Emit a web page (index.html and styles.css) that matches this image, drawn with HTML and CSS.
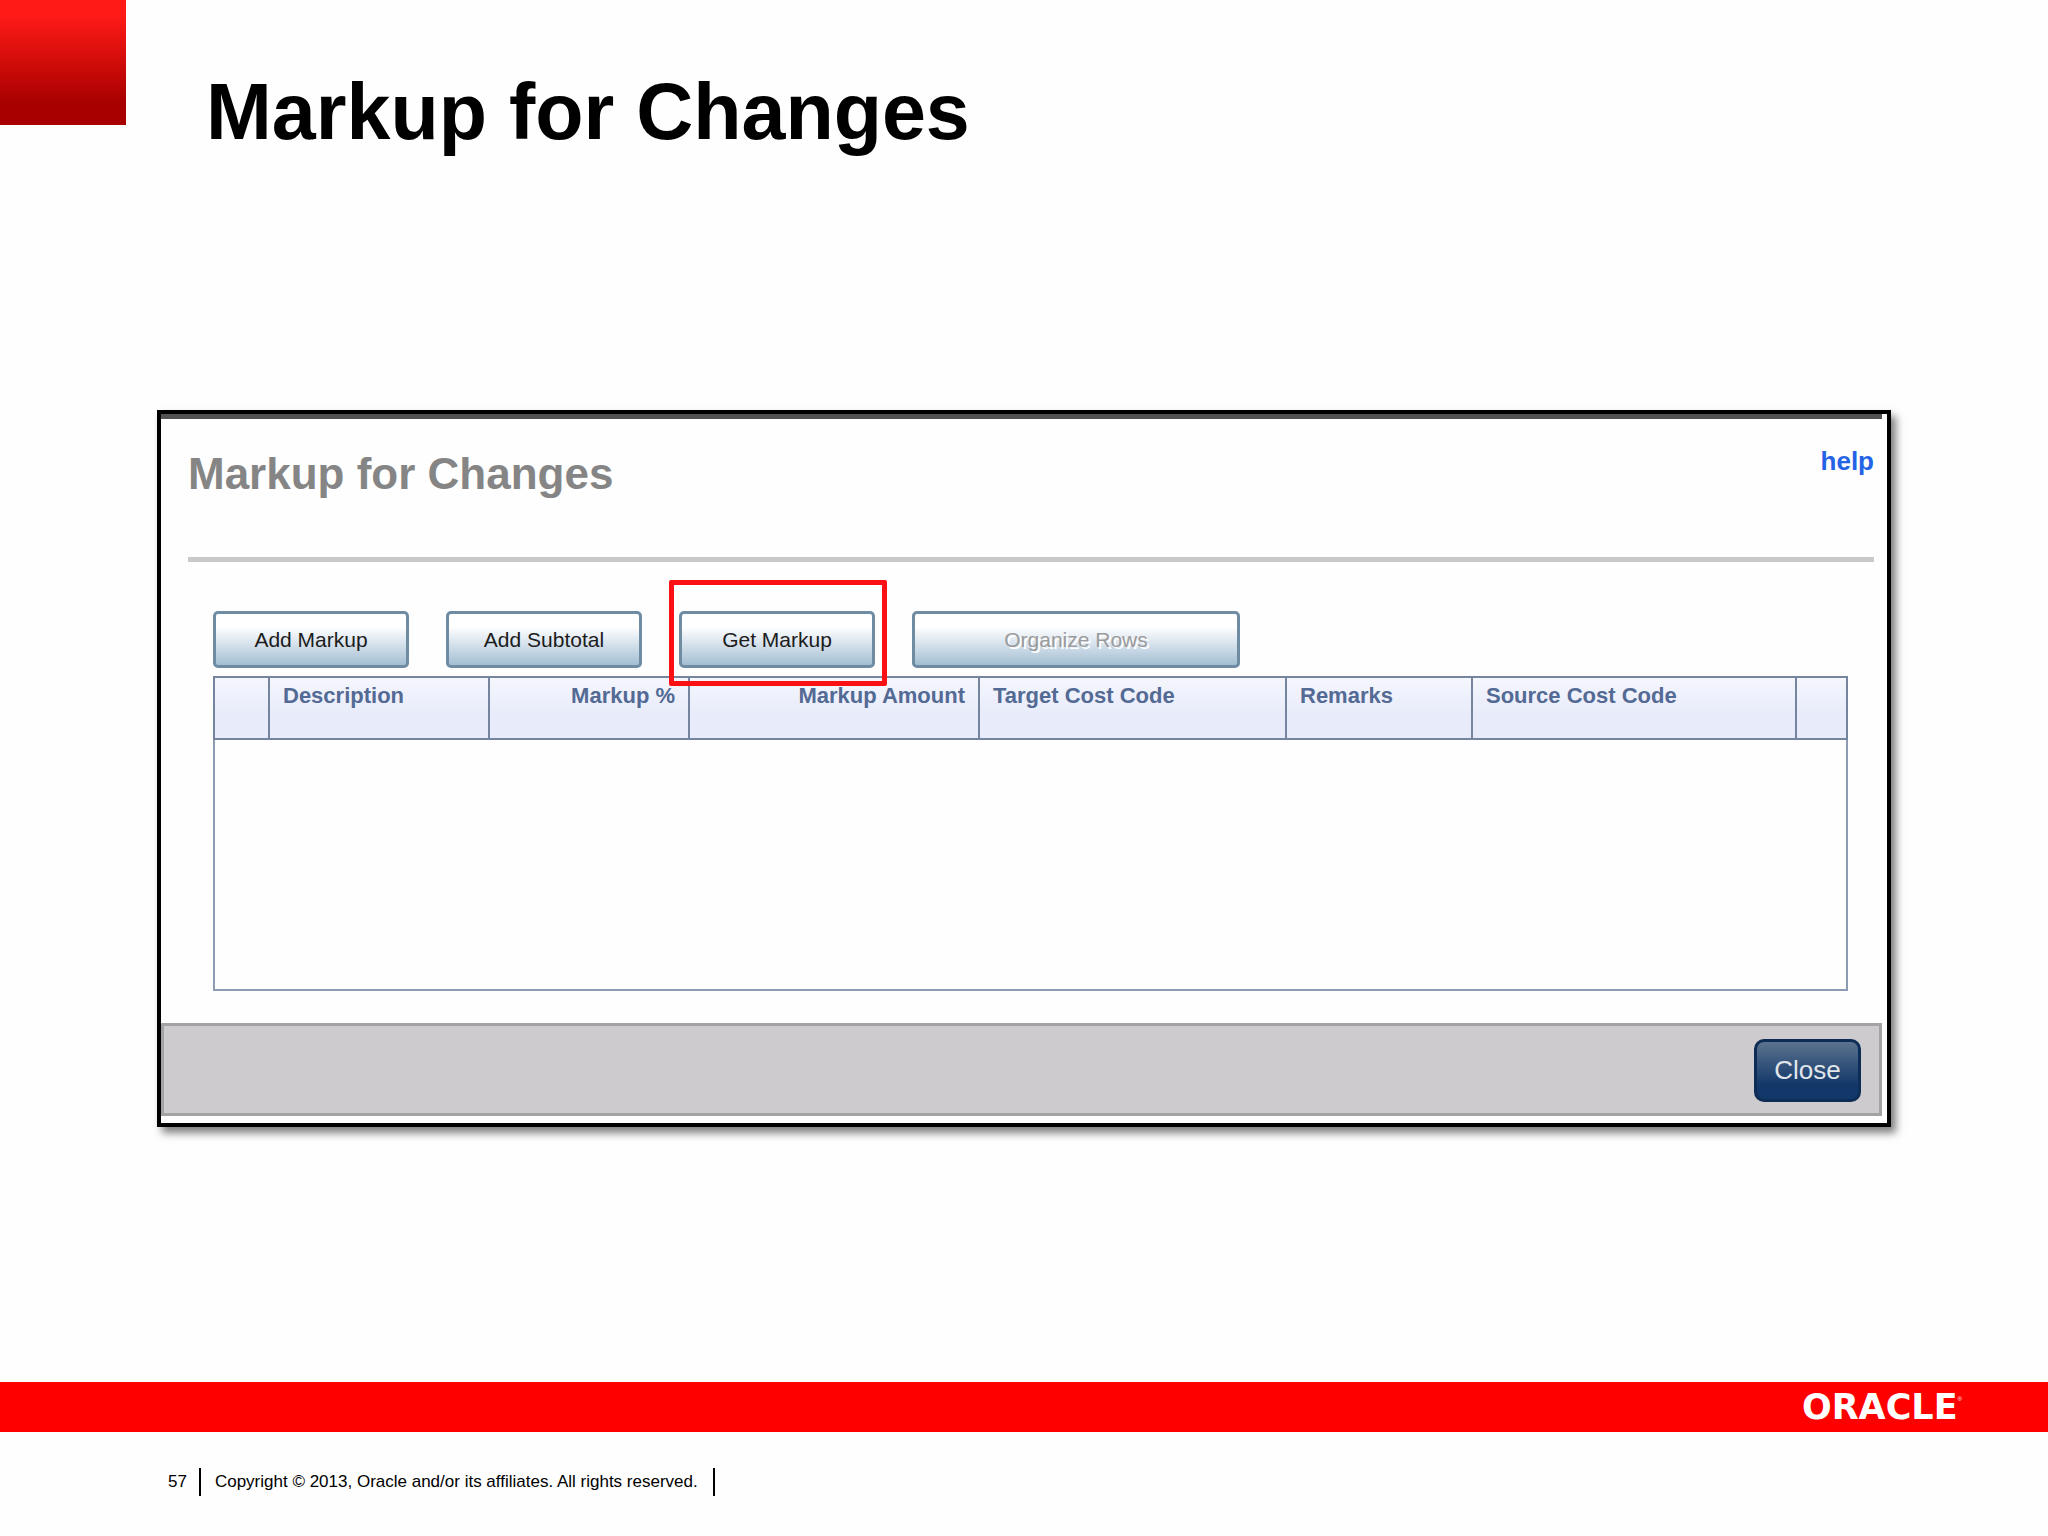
FILE: index.html
```html
<!DOCTYPE html>
<html lang="en">
<head>
  <meta charset="UTF-8">
  <meta name="viewport" content="width=device-width, initial-scale=1.0">
  <title>Markup for Changes</title>
  <link rel="stylesheet" href="styles.css">
</head>
<body>
  <header class="slide-header">
    <div class="corner"></div>
    <h1>Markup for Changes</h1>
  </header>

  <main class="slide-body">
    <section class="dialog">
      <div class="dialog-content">
        <div class="dialog-header">
          <h2>Markup for Changes</h2>
          <a href="#" class="help">help</a>
        </div>

        <div class="panel">
          <div class="toolbar">
            <button type="button" class="btn">Add Markup</button>
            <button type="button" class="btn">Add Subtotal</button>
            <div class="highlight">
              <button type="button" class="btn">Get Markup</button>
            </div>
            <button type="button" class="btn btn-wide" disabled>Organize Rows</button>
          </div>

          <table class="grid">
            <colgroup>
              <col class="col-select">
              <col class="col-description">
              <col class="col-percent">
              <col class="col-amount">
              <col class="col-target">
              <col class="col-remarks">
              <col class="col-source">
              <col class="col-end">
            </colgroup>
            <thead>
              <tr>
                <th></th>
                <th>Description</th>
                <th class="num">Markup %</th>
                <th class="num">Markup Amount</th>
                <th>Target Cost Code</th>
                <th>Remarks</th>
                <th>Source Cost Code</th>
                <th></th>
              </tr>
            </thead>
            <tbody>
              <tr><td colspan="8"></td></tr>
            </tbody>
          </table>
        </div>
      </div>

      <div class="dialog-footer">
        <button type="button" class="btn-close">Close</button>
      </div>
    </section>
  </main>

  <div class="brand-bar">
    <span class="brand">ORACLE</span><sup class="reg">®</sup>
  </div>

  <footer class="slide-footer">
    <span class="page-number">57</span>
    <span class="copyright">Copyright © 2013, Oracle and/or its affiliates. All rights reserved.</span>
  </footer>
</body>
</html>
```

FILE: styles.css
```css
* {
  margin: 0;
  padding: 0;
  box-sizing: border-box;
}

body {
  display: flex;
  flex-direction: column;
  min-height: 100vh;
  background: #fefefe;
  color: #000;
  font-family: "Liberation Sans", Arial, sans-serif;
}

/* slide heading */
.slide-header {
  display: flex;
  align-items: flex-start;
  gap: 80px;
}

.corner {
  width: 126px;
  height: 125px;
  background: linear-gradient(#ff1a16 12%, #a80000 82%);
}

.slide-header h1 {
  padding-top: 66px;
  font-size: 79px;
  line-height: 92px;
}

.slide-body {
  flex: 1;
  padding: 252px 157px 40px;
}

/* dialog */
.dialog {
  padding: 0 5px 7px 0;
  border: 4px solid #000;
  background: #fefefe;
  box-shadow: 5px 6px 8px rgba(0, 0, 0, 0.5);
}

.dialog-content {
  padding: 24px 8px 32px 27px;
  border-top: 5px solid #525254;
}

.dialog-header {
  display: flex;
  justify-content: space-between;
  align-items: flex-start;
  height: 119px;
  border-bottom: 5px solid #cac8ca;
}

.dialog-header h2 {
  color: #858585;
  font-size: 44px;
  line-height: 62px;
}

.help {
  color: #2463e6;
  font-size: 26px;
  font-weight: bold;
  line-height: 36px;
  text-decoration: none;
}

.panel {
  padding: 49px 27px 0 25px;
}

.toolbar {
  display: flex;
  gap: 37px;
  margin-bottom: 8px;
}

.btn {
  width: 196px;
  height: 57px;
  border: 3px solid #6f8ca3;
  border-radius: 5px;
  background: linear-gradient(#fff 25%, #d5e1ec 60%, #a3bed2);
  color: #1c1c1c;
  font-family: inherit;
  font-size: 21px;
}

.btn-wide {
  width: 328px;
}

.btn:disabled {
  color: #9b9b9b;
  text-shadow: 2px 2px 0 #fff;
}

.highlight {
  position: relative;
}

.highlight::after {
  content: "";
  position: absolute;
  inset: -31px -12px -18px -10px;
  border: 5px solid #fb1114;
  border-radius: 2px;
  pointer-events: none;
}

/* grid */
.grid {
  width: 100%;
  border: 2px solid #8d9bb4;
  border-collapse: collapse;
  table-layout: fixed;
}

.col-select { width: 55px; }
.col-description { width: 220px; }
.col-percent { width: 200px; }
.col-amount { width: 290px; }
.col-target { width: 307px; }
.col-remarks { width: 186px; }
.col-source { width: 324px; }
.col-end { width: 51px; }

.grid th {
  height: 62px;
  padding: 2px 13px;
  border: 2px solid #76859f;
  background: linear-gradient(#f5f6fd, #e8ecfa 60%);
  color: #536a94;
  font-size: 22px;
  line-height: 32px;
  text-align: left;
  vertical-align: top;
  white-space: nowrap;
}

.grid .num {
  text-align: right;
}

.grid td {
  height: 251px;
}

.dialog-footer {
  display: flex;
  justify-content: flex-end;
  padding: 13px 18px 11px;
  border: 3px solid #a3a2a4;
  background: #cdcbcd;
}

.btn-close {
  width: 107px;
  height: 63px;
  border: 3px solid #0d2c56;
  border-radius: 10px;
  background: linear-gradient(#5c738e, #12386a 75%);
  color: #e2e6eb;
  font-family: inherit;
  font-size: 26px;
}

/* bottom of slide */
.brand-bar {
  display: flex;
  justify-content: flex-end;
  align-items: center;
  height: 50px;
  padding-right: 86px;
  background: #f00;
  color: #fff;
}

.brand {
  font-family: "DejaVu Sans", sans-serif;
  font-size: 35px;
  font-weight: bold;
  line-height: 50px;
}

.reg {
  align-self: flex-start;
  padding-top: 13px;
  font-size: 6px;
  line-height: 8px;
}

.slide-footer {
  display: flex;
  align-items: flex-start;
  height: 104px;
  padding: 36px 168px 0;
  font-size: 17px;
  line-height: 28px;
}

.page-number {
  padding-right: 12px;
}

.copyright {
  padding: 0 15px 0 14px;
  border-left: 2px solid #000;
  border-right: 2px solid #000;
}
```
